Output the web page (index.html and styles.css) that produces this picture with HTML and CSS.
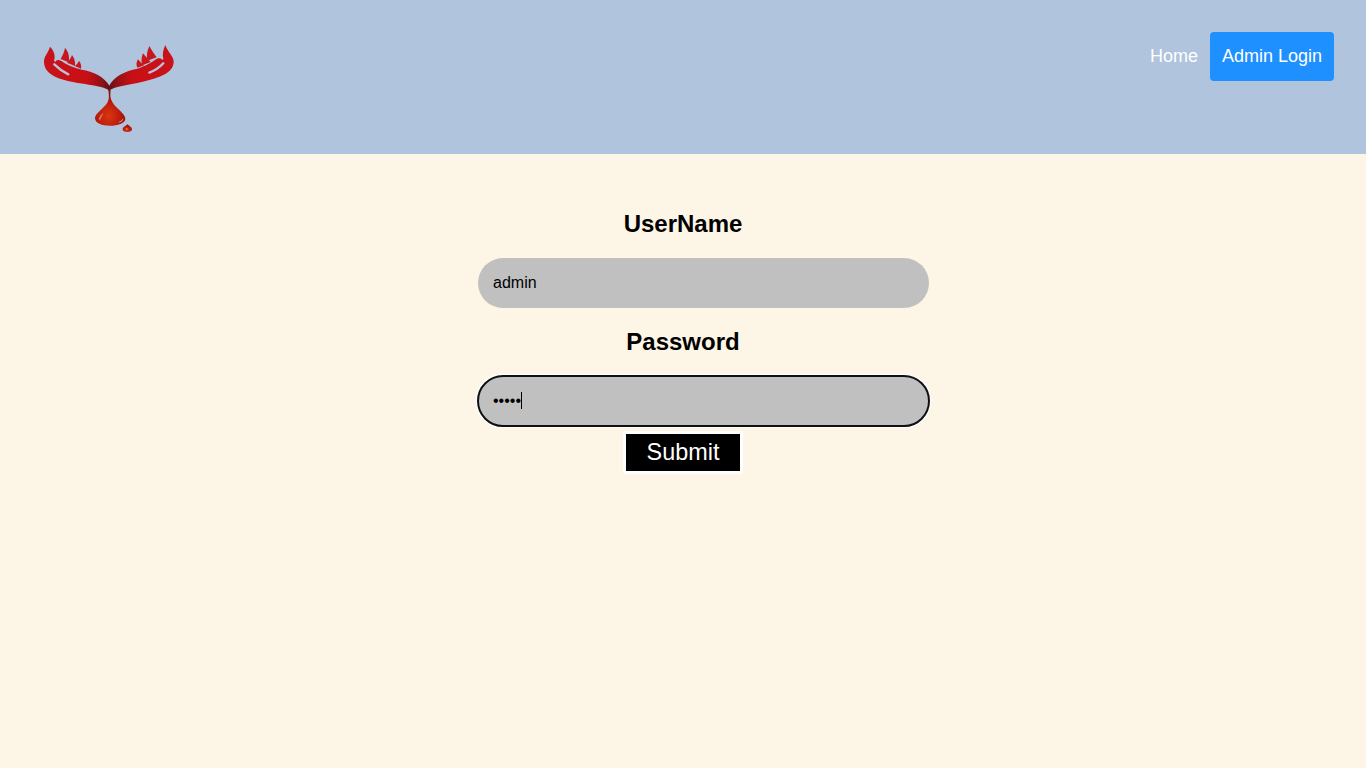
FILE: index.html
```html
<!DOCTYPE html>
<html lang="en">
<head>
  <meta charset="UTF-8">
  <meta name="viewport" content="width=device-width, initial-scale=1.0">
  <title>Admin Login</title>
  <link rel="stylesheet" href="styles.css">
</head>
<body>
  <header class="header">
    <a href="#" class="logo">
      <svg class="logo-img" viewBox="0 0 480 330" width="160" height="110">
        <defs>
          <linearGradient id="handLeft" gradientUnits="userSpaceOnUse" x1="42" y1="0" x2="240" y2="0">
            <stop offset="0" stop-color="#c9121a"/>
            <stop offset="0.65" stop-color="#c80f14"/>
            <stop offset="0.88" stop-color="#8e1216"/>
            <stop offset="1" stop-color="#5c1014"/>
          </linearGradient>
          <linearGradient id="handRight" gradientUnits="userSpaceOnUse" x1="431" y1="0" x2="236" y2="0">
            <stop offset="0" stop-color="#c9121a"/>
            <stop offset="0.65" stop-color="#c80f14"/>
            <stop offset="0.88" stop-color="#8e1216"/>
            <stop offset="1" stop-color="#5c1014"/>
          </linearGradient>
          <radialGradient id="drop" cx="0.45" cy="0.72" r="0.62">
            <stop offset="0" stop-color="#d8380f"/>
            <stop offset="0.55" stop-color="#c01c0e"/>
            <stop offset="1" stop-color="#8c1208"/>
          </radialGradient>
        </defs>
        <!-- left hand -->
        <path fill="url(#handLeft)" d="M240 182 C215 166 175 165 125 155 C80 146 42 130 42 95 C42 78 55 68 60 50 C70 60 78 76 72 92 L76 96 C78 90 86 88 94 93 C110 104 130 114 155 119 C190 125 222 138 240 170 Z"/>
        <path class="logo-slit" d="M73 103 C85 115 100 126 115 133"/>
        <path fill="#c8161c" d="M105 54 C113 62 120 78 116 97 L92 87 C97 78 103 66 105 54 Z"/>
        <path fill="#c8161c" d="M126 75 C132 83 137 94 135 108 L111 98 C117 92 123 84 126 75 Z"/>
        <path fill="#c8161c" d="M147 92 C152 98 155 106 153 116 L134 108 C140 104 144 99 147 92 Z"/>
        <!-- right hand -->
        <path fill="url(#handRight)" d="M236 182 C260 166 300 165 350 152 C395 140 431 126 431 95 C431 78 412 65 406 45 C400 58 396 72 400 86 L397 90 C393 84 385 83 378 88 C365 97 345 109 322 116 C285 124 254 136 236 170 Z"/>
        <path class="logo-slit" d="M400 100 C388 113 374 122 358 128"/>
        <path fill="#c8161c" d="M358 48 C364 58 372 72 380 82 L352 92 C348 78 352 62 358 48 Z"/>
        <path fill="#c8161c" d="M339 70 C345 78 354 88 362 96 L337 106 C333 94 334 82 339 70 Z"/>
        <path fill="#c8161c" d="M324 88 C329 94 335 101 342 106 L322 113 C318 104 319 96 324 88 Z"/>
        <!-- drops -->
        <path fill="url(#drop)" d="M235 180 L242 180 C240 196 241 206 247 216 C256 234 286 250 286 266 C286 280 262 287 240 287 C216 287 195 280 195 264 C195 250 224 234 233 216 C238 206 237 196 235 180 Z"/>
        <path fill="#f0a080" opacity="0.6" d="M206 266 C209 258 214 252 220 248 C218 256 214 262 210 272 Z"/>
        <path fill="#f4d8c0" opacity="0.7" d="M264 277 C271 275 276 271 280 265 C280 272 273 279 264 277 Z"/>
        <path fill="url(#drop)" d="M292 283 C296 287 306 291 306 298 C306 304 299 306 292 306 C284 306 278 304 278 298 C278 291 288 288 292 283 Z"/>
        <circle cx="290" cy="297" r="3" fill="#f0a080" opacity="0.6"/>
      </svg>
    </a>
    <nav class="nav">
      <a href="#" class="nav-link">Home</a>
      <a href="#" class="nav-link active">Admin Login</a>
    </nav>
  </header>

  <form class="login-form">
    <label class="form-label" for="username">UserName</label>
    <div class="field">
      <input class="form-input" type="text" id="username" name="username" value="admin">
    </div>
    <label class="form-label" for="password">Password</label>
    <div class="field field-last">
      <input class="form-input" type="password" id="password" name="password" value="admin" autofocus>
      <span class="caret"></span>
    </div>
    <input class="submit-btn" type="submit" value="Submit">
  </form>
</body>
</html>
```

FILE: styles.css
```css
* {
  box-sizing: border-box;
}

body {
  margin: 0;
  min-height: 100vh;
  background-color: #fdf5e6;
  font-family: "Liberation Sans", Arial, sans-serif;
}

.header {
  display: flex;
  justify-content: space-between;
  align-items: flex-start;
  height: 154px;
  padding: 32px 32px 0 30px;
  background-color: #b0c4de;
}

.logo {
  display: block;
  margin-top: -2px;
}

.logo-img {
  display: block;
}

.logo-slit {
  fill: none;
  stroke: #bac2dc;
  stroke-width: 7;
  stroke-linecap: round;
}

.nav {
  display: flex;
  align-items: center;
}

.nav-link {
  padding: 12px;
  border-radius: 4px;
  color: white;
  font-size: 18px;
  line-height: 25px;
  text-decoration: none;
}

.nav-link.active {
  background-color: dodgerblue;
}

.login-form {
  display: flex;
  flex-direction: column;
  align-items: center;
  padding-top: 56px;
}

.form-label {
  margin-bottom: 20px;
  font-size: 24px;
  font-weight: bold;
  line-height: 28px;
}

.field {
  position: relative;
  width: 451px;
  height: 50px;
  margin-left: 41px;
  margin-bottom: 20px;
}

.field-last {
  margin-bottom: 5px;
}

.form-input {
  display: block;
  width: 100%;
  height: 100%;
  padding: 0 15px;
  border: none;
  border-radius: 25px;
  background-color: silver;
  color: black;
  font-family: inherit;
  font-size: 16px;
}

/* the text cursor in the focused password box */
.caret {
  position: absolute;
  top: 16px;
  left: 43px;
  width: 1px;
  height: 17px;
  background-color: black;
}

.submit-btn {
  width: 120px;
  height: 43px;
  border: 3px solid white;
  border-radius: 3px;
  background-color: black;
  color: white;
  font-family: inherit;
  font-size: 23.4px;
}
```
